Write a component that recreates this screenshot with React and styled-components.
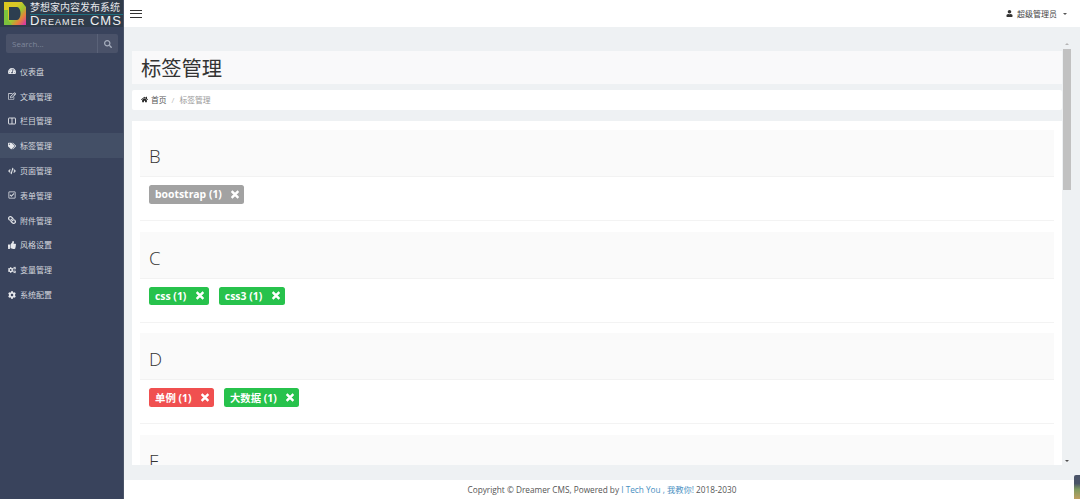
import React from "react";
import styled, { createGlobalStyle } from "styled-components";
import { FaTachometerAlt, FaRegEdit, FaTags, FaCode, FaRegCheckSquare, FaLink, FaThumbsUp, FaCogs, FaCog, FaHome, FaUser, FaTimes, FaSearch } from "react-icons/fa";

const Global = createGlobalStyle`
  html, body { margin: 0; padding: 0; height: 100%; overflow: hidden; }
  body { font-family: "Open Sans", "Noto Sans CJK SC", sans-serif; color: #3a3f51; }
  * { box-sizing: border-box; }
`;
const Page = styled.div`display: flex; width: 1080px; height: 499px; position: relative; overflow: hidden; background: #fff;`;
const Sidebar = styled.aside`width: 124px; flex: none; background: #39435c; border-right: 1px solid #4a5468; display: flex; flex-direction: column;`;
const Brand = styled.div`height: 27px; background: #2f3b4a; display: flex; align-items: center; padding-left: 4px; gap: 4px; flex: none; overflow: hidden;`;
const BrandText = styled.div`display: flex; flex-direction: column; flex: 1; min-width: 0;`;
const BrandCn = styled.div`font-size: 10px; line-height: 13px; color: #e4e6ea; white-space: nowrap; padding-left: 0;`;
const BrandEn = styled.div`font-family: "Liberation Sans", sans-serif; font-size: 13px; line-height: 12px; font-variant: small-caps; color: #eef0f2; border-top: 1px solid #1f6f80; white-space: nowrap; font-weight: 400; letter-spacing: 1.05px;`;
const SearchBox = styled.div`margin: 7px 5px 0 6px; height: 19px; background: #4a5269; border-radius: 2px; display: flex; align-items: center; color: #8a92a6; font-size: 8px;`;
const SearchLabel = styled.div`flex: 1; padding-left: 6px; color: #7f879b;`;
const SearchBtn = styled.div`width: 21px; height: 100%; border-left: 1px solid #5a6278; display: flex; align-items: center; justify-content: center; color: #a6adbd; font-size: 8px;`;
const Nav = styled.nav`display: flex; flex-direction: column; margin-top: 6px;`;
const NavItem = styled.div`height: 24.8px; display: flex; align-items: center; padding-left: 8px; gap: 4px; font-size: 8px; color: #d5d8de; background: ${p => p.$active ? "#434f66" : "transparent"}; svg { width: 8px; height: 8px; flex: none; color: #e6e8ec; }`;
const FlippedLink = styled(FaLink)`transform: scaleX(-1);`;
const Column = styled.div`flex: 1; display: flex; flex-direction: column; min-width: 0;`;
const TopBar = styled.header`height: 27px; flex: none; background: #fff; display: flex; align-items: center; justify-content: space-between; padding: 0 13px 0 6px; font-size: 8px; color: #444;`;
const Burger = styled.div`width: 12px; height: 8px; border-top: 1px solid #333; border-bottom: 1px solid #333; position: relative; &::after { content: ""; position: absolute; left: 0; right: 0; top: 2.5px; height: 1px; background: #333; }`;
const User = styled.div`display: flex; align-items: center; gap: 4px; svg { width: 7px; height: 7px; color: #333; }`;
const Caret = styled.span`width: 0; height: 0; border: 2.5px solid transparent; border-top-color: #555; border-bottom: 0; margin-left: 2px;`;
const Middle = styled.div`flex: 1; display: flex; min-height: 0; background: #eef1f3;`;
const Scroll = styled.main`flex: 1; min-width: 0; padding: 24px 0 0 8px; display: flex; flex-direction: column; overflow: hidden; height: 438px;`;
const Title = styled.h1`margin: 0; height: 33px; flex: none; background: #f9f9fa; font-weight: 400; font-size: 20.3px; line-height: 34px; padding-left: 9px; color: #333;`;
const Crumbs = styled.div`margin-top: 6px; height: 20px; flex: none; background: #fff; display: flex; align-items: center; padding: 0 0 1px 9px; font-size: 7.8px; gap: 4px; color: #999; border-radius: 2px; svg { width: 7px; height: 7px; color: #222; }`;
const CrumbHome = styled.span`display: inline-flex; align-items: center; gap: 3px; color: #555;`;
const CrumbSep = styled.span`color: #bbb; margin: 0 1px;`;
const Card = styled.section`margin-top: 11px; flex: none; height: 344px; background: #fff; padding: 9px 8px 0; overflow: hidden;`;
const Group = styled.div`height: 91px; border-bottom: 1px solid #f3f3f3; margin-bottom: 10.5px;`;
const GroupHead = styled.div`height: 47px; background: #fafafa; border-bottom: 1px solid #f2f2f2; padding: 14px 0 0 9px; font-size: 18.5px; font-weight: 300; line-height: 24px; color: #333;`;
const Tags = styled.div`display: flex; gap: 10px; padding: 8px 0 0 9px;`;
const Tag = styled.span`height: 18.5px; display: inline-flex; align-items: center; gap: 9.5px; padding: 0 5px 0 6px; border-radius: 2.5px; font-size: 10.4px; font-weight: 700; color: #fff; background: ${p => p.$color}; svg { width: 8px; height: 11px; stroke: currentColor; stroke-width: 30; }`;
const Bar = styled.div`width: 18px; flex: none; position: relative; padding: 22px 9px 0 1px; display: flex; flex-direction: column; align-items: center; height: 438px;`;
const Arrow = styled.span`position: absolute; left: 3px; width: 0; height: 0; border: 2.5px solid transparent; ${p => p.$up ? "top: 16px; border-bottom-color: #b5b5b5; border-top: 0;" : "bottom: 3px; border-top-color: #505050; border-bottom: 0;"}`;
const Thumb = styled.div`width: 8px; height: 141px; background: #c1c1c1;`;
const Footer = styled.footer`height: 19px; flex: none; background: #fff; text-align: center; font-size: 8.25px; line-height: 19px; color: #555;`;
const FootLink = styled.a`color: #4a90c2;`;
const Strip = styled.div`position: absolute; right: 0; bottom: 0; width: 6px; height: 24px; border-radius: 2px 0 0 0; background: linear-gradient(#4a5468 0 35%, #7f9a60 60%, #c0a060);`;

const ColumnsIcon = () => (
  <svg viewBox="0 0 16 16" fill="none" stroke="currentColor" strokeWidth="1.8">
    <rect x="1" y="2" width="14" height="12" rx="1" />
    <path d="M8 2V14" />
  </svg>
);

const items = [
  [FaTachometerAlt, "仪表盘"], [FaRegEdit, "文章管理"], [ColumnsIcon, "栏目管理"], [FaTags, "标签管理", true],
  [FaCode, "页面管理"], [FaRegCheckSquare, "表单管理"], [FlippedLink, "附件管理"], [FaThumbsUp, "风格设置"],
  [FaCogs, "变量管理"], [FaCog, "系统配置"],
];
const groups = [
  ["B", [["bootstrap (1)", "#a2a2a2"]]],
  ["C", [["css (1)", "#27c24c"], ["css3 (1)", "#27c24c"]]],
  ["D", [["单例 (1)", "#f05050"], ["大数据 (1)", "#27c24c"]]],
  ["F", []],
];

const Logo = () => (
  <svg width="22" height="23" viewBox="0 0 22 23">
    <defs>
      <linearGradient id="lg" x1="0" y1="0" x2="1" y2="0.9">
        <stop offset="0" stopColor="#dcc61e" /><stop offset="0.4" stopColor="#d8c828" /><stop offset="0.6" stopColor="#9ac830" /><stop offset="0.8" stopColor="#e8803a" /><stop offset="1" stopColor="#d83aa0" />
      </linearGradient>
    </defs>
    <path d="M0 0H18L22 5V23H0Z" fill="url(#lg)" />
    <path d="M0 8H4V18L8 23H0Z" fill="#7cc23c" />
    <path d="M5 5H13C15 5 16.5 8 16.5 11.5C16.5 15 15 18 13 18H5Z" fill="#2c3e50" />
  </svg>
);

export default function App() {
  return (
    <Page>
      <Global />
      <Sidebar>
        <Brand>
          <Logo />
          <BrandText>
            <BrandCn>梦想家内容发布系统</BrandCn>
            <BrandEn>Dreamer CMS</BrandEn>
          </BrandText>
        </Brand>
        <SearchBox><SearchLabel>Search...</SearchLabel><SearchBtn><FaSearch /></SearchBtn></SearchBox>
        <Nav>
          {items.map(([I, t, a]) => <NavItem key={t} $active={a}><I />{t}</NavItem>)}
        </Nav>
      </Sidebar>
      <Column>
        <TopBar>
          <Burger />
          <User><FaUser /> 超级管理员 <Caret /></User>
        </TopBar>
        <Middle>
          <Scroll>
            <Title>标签管理</Title>
            <Crumbs><CrumbHome><FaHome />首页</CrumbHome><CrumbSep>/</CrumbSep>标签管理</Crumbs>
            <Card>
              {groups.map(([l, ts]) => (
                <Group key={l}>
                  <GroupHead>{l}</GroupHead>
                  <Tags>{ts.map(([t, c]) => <Tag key={t} $color={c}>{t}<FaTimes /></Tag>)}</Tags>
                </Group>
              ))}
            </Card>
          </Scroll>
          <Bar><Arrow $up /><Thumb /><Arrow /></Bar>
        </Middle>
        <Footer>Copyright © Dreamer CMS, Powered by <FootLink>I Tech You , 我教你!</FootLink> 2018-2030</Footer>
      </Column>
      <Strip />
    </Page>
  );
}
